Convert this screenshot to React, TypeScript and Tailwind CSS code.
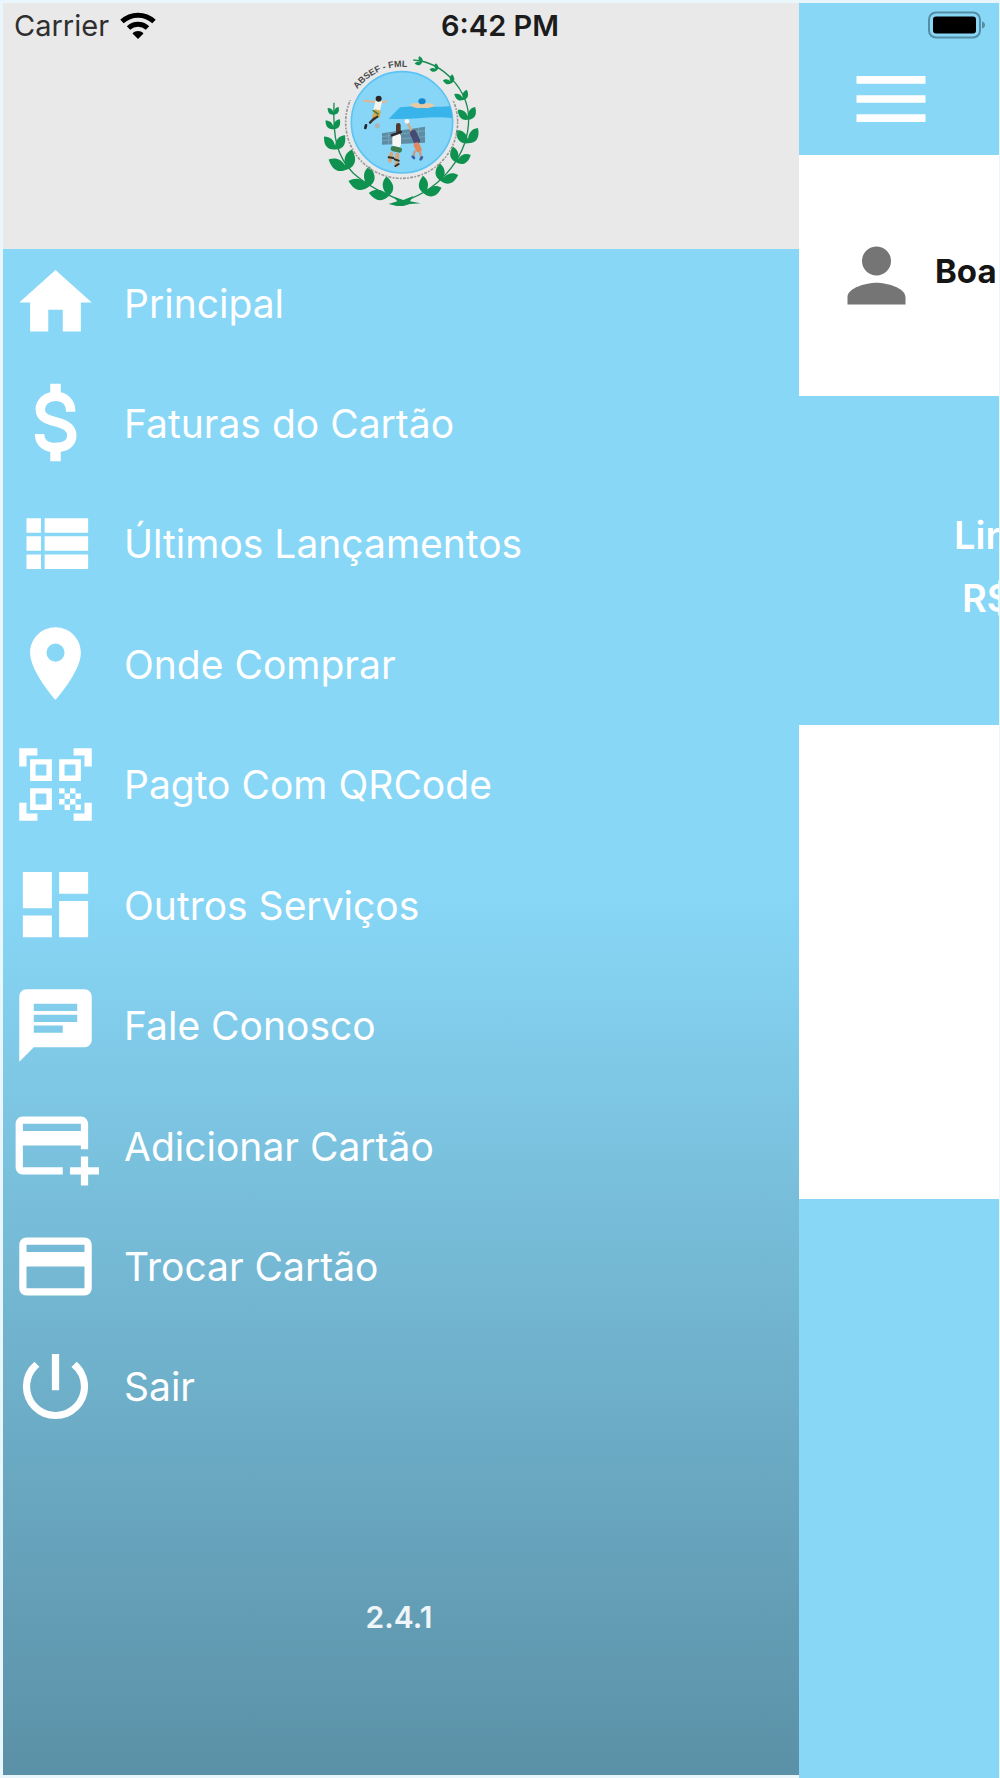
import type { ReactNode } from 'react';
import {
  MdChat,
  MdCreditCard,
  MdDashboard,
  MdHome,
  MdLocationOn,
  MdMenu,
  MdPerson,
  MdPowerSettingsNew,
  MdQrCodeScanner,
} from 'react-icons/md';

interface MenuItem { label: string; icon: ReactNode; }

const iconClass = 'size-[87px] shrink-0';

function DollarIcon() {
  return (
    <svg viewBox="0 0 24 24" className={iconClass} fill="none" stroke="currentColor" strokeWidth="2.6" aria-hidden="true">
      <path d="M16.2 9C16.2 6.4 14.6 4.8 12 4.8C9.4 4.8 7.8 6.4 7.8 8.4C7.8 10.5 9.6 11.2 12 11.8C14.6 12.5 16.5 13.3 16.5 15.6C16.5 17.8 14.6 18.9 12 18.9C9.3 18.9 7.6 17.6 7.6 15.2" />
      <path d="M12 1.3V5M12 18.6V22.7" strokeWidth="2.9" />
    </svg>
  );
}

function ViewListIcon() {
  return (
    <svg viewBox="0 0 24 24" className={iconClass} fill="currentColor" aria-hidden="true">
      <path d="M4 14h4v-4H4v4zm0 5h4v-4H4v4zM4 9h4V5H4v4zm5 5h12v-4H9v4zm0 5h12v-4H9v4zM9 5v4h12V5H9z" />
    </svg>
  );
}

function AddCardIcon() {
  return (
    <svg viewBox="0 0 24 24" className={iconClass} fill="currentColor" aria-hidden="true">
      <path d="M3 4h16c1.11 0 2 .89 2 2v7h-2v-1H3v6h11v2H3c-1.11 0-2-.89-2-2V6c0-1.11.89-2 2-2zm0 2v2h16V6H3z" fillRule="evenodd" />
      <path d="M19 15h2v3h3v2h-3v3h-2v-3h-3v-2h3z" />
    </svg>
  );
}

const menuItems: MenuItem[] = [
  { label: 'Principal', icon: <MdHome className={iconClass} /> },
  { label: 'Faturas do Cartão', icon: <DollarIcon /> },
  { label: 'Últimos Lançamentos', icon: <ViewListIcon /> },
  { label: 'Onde Comprar', icon: <MdLocationOn className={iconClass} /> },
  { label: 'Pagto Com QRCode', icon: <MdQrCodeScanner className={iconClass} /> },
  { label: 'Outros Serviços', icon: <MdDashboard className={iconClass} /> },
  { label: 'Fale Conosco', icon: <MdChat className={iconClass} /> },
  { label: 'Adicionar Cartão', icon: <AddCardIcon /> },
  { label: 'Trocar Cartão', icon: <MdCreditCard className={iconClass} /> },
  { label: 'Sair', icon: <MdPowerSettingsNew className={iconClass} /> },
];

// x, y, rotation and scale of each pair of leaves on the wreath
const leaves = [
  [71, 222, 0, 0.5], [70, 265, 0, 0.65], [75, 325, 2, 0.95], [108, 385, -18, 1.15], [172, 438, -30, 1.15], [232, 466, -38, 1.1],
  [345, 458, 38, 1], [395, 420, 38, 1], [440, 364, 30, 0.9], [474, 306, 0, 1], [474, 236, -4, 0.8], [459, 178, -14, 0.6],
  [423, 128, -28, 0.5], [379, 90, -40, 0.4], [334, 68, -55, 0.4],
];

function Crest() {
  return (
    <svg viewBox="33 30 480 480" className="size-[160px]" role="img" aria-label="ABSEF - FML">
      <g fill="none" stroke="#1c8a52" strokeWidth="4">
        <path d="M72 188C68 300 82 350 130 400C175 440 225 462 280 484" />
        <path d="M310 60C400 66 475 150 476 236C476 340 400 445 280 484" />
      </g>
      <g fill="#0f9150">
        {leaves.map(([x, y, r, s]) => (
          <path key={`${x}-${y}`} d="M0 4C-26 6-36-10-36-36C-16-36-4-26 0-8C2-28 12-40 30-42C36-14 26 4 0 4Z" transform={`translate(${x} ${y}) rotate(${r}) scale(${s})`} />
        ))}
        <path d="M236 492L262 484L250 470L280 480L310 468L300 484L332 490L300 492L280 498L260 498Z" />
      </g>
      <circle cx="275" cy="247" r="168" fill="none" stroke="#9a9a9a" strokeWidth="5" strokeDasharray="5 4 9 4" pathLength="1056" clipPath="url(#crest-ring)" />
      <clipPath id="crest-ring">
        <path d="M90 180H460V430H90Z" />
      </clipPath>
      <circle cx="276" cy="247" r="152" fill="#87d6f7" stroke="#5cc4f4" strokeWidth="5" />
      <path id="crest-arc" d="M142 148A166 166 0 0 1 310 84" fill="none" />
      <text fontSize="27" fontWeight="600" fill="#4a4a4a" fontFamily="Liberation Sans, sans-serif">
        <textPath href="#crest-arc">ABSEF - FML</textPath>
      </text>
      <path d="M236 236L270 202C310 196 370 204 419 198Q428 215 426 234C370 226 300 240 236 236Z" fill="#38b4ea" />
      <path d="M300 194C315 186 325 190 337 190C350 190 360 188 375 196C362 206 350 204 337 204C322 204 312 206 300 194Z" fill="#e9c9a2" />
      <ellipse cx="336" cy="184" rx="11" ry="9" fill="#1688cf" />
      <g strokeLinecap="round" fill="none">
        <path d="M162 182L196 186M212 188L230 184" stroke="#dfb792" strokeWidth="6" />
        <path d="M206 186L200 210" stroke="#f3f3ee" strokeWidth="20" />
        <path d="M198 214L192 232M206 216L204 228" stroke="#d8a94c" strokeWidth="12" />
        <path d="M190 212L204 222" stroke="#3e7d48" strokeWidth="5" />
        <path d="M192 236L180 248M202 230L188 240" stroke="#3a3230" strokeWidth="7" />
        <path d="M168 256L166 264" stroke="#232327" strokeWidth="8" />
      </g>
      <circle cx="206" cy="176" r="9" fill="#2c2626" />
      <circle cx="202" cy="257" r="8" fill="#aab6bd" />
      <path d="M216 280L345 260V308L216 314Z" fill="#5d8ca3" />
      <path d="M216 290L345 272M216 302L345 290M236 277V313M326 263V309" stroke="#7fb0c6" strokeWidth="2" />
      <g strokeLinecap="round" fill="none">
        <path d="M265 256V282" stroke="#54382c" strokeWidth="14" />
        <path d="M260 290V312" stroke="#f6f6f6" strokeWidth="26" />
        <path d="M246 286L272 276" stroke="#2c2a30" strokeWidth="8" />
        <path d="M250 326L268 330" stroke="#3b7f52" strokeWidth="16" />
        <path d="M244 342L240 362M262 344L260 376" stroke="#dca577" strokeWidth="12" />
        <path d="M236 352L250 354M254 358L266 362M256 378L266 372" stroke="#29302c" strokeWidth="6" />
        <path d="M292 246L306 276" stroke="#d8ab84" strokeWidth="8" />
        <path d="M310 280L320 302" stroke="#474a73" strokeWidth="20" />
        <path d="M320 316L326 328" stroke="#e2895e" strokeWidth="18" />
        <path d="M314 334L310 350M330 336L334 356" stroke="#c79b83" strokeWidth="7" />
        <path d="M308 350L312 354M332 358L336 352" stroke="#3b64a8" strokeWidth="8" />
      </g>
      <circle cx="291" cy="244" r="7" fill="#f8f8f8" />
    </svg>
  );
}

function StatusBar() {
  return (
    <div className="absolute inset-x-0 top-0 grid h-[50px] grid-cols-3 items-center px-[14px] text-[29px] leading-none">
      <div className="flex items-center gap-[11px] text-[#2f2f2f]">
        <span>Carrier</span>
        <svg viewBox="0 0 36 27" className="h-[27px] w-[36px]" fill="none" stroke="#000" strokeWidth="5" aria-hidden="true">
          <path d="M2 9.500C11 1 25 1 34 9.500" />
          <path d="M8.500 16C14 11 22 11 27.500 16" />
          <path d="M18 27L12.500 21.500C15.500 18.300 20.500 18.300 23.500 21.500Z" fill="#000" stroke="none" />
        </svg>
      </div>
      <span className="text-center font-semibold text-[#1c1c1c]">6:42 PM</span>
      <svg viewBox="0 0 58 28" className="h-[28px] w-[58px] justify-self-end" aria-hidden="true">
        <rect x="1" y="1.500" width="51" height="25" rx="7" fill="none" stroke="#548ea5" strokeWidth="2" />
        <rect x="5" y="5.500" width="43" height="17" rx="3" />
        <path d="M54 10.500C58 11 58 17 54 17.500Z" fill="#548ea5" />
      </svg>
    </div>
  );
}

function Drawer() {
  return (
    <aside className="mb-[3px] flex flex-col bg-linear-to-b from-[#88d7f7] from-50% to-[#5b91a7]">
      <header className="flex h-[246px] justify-center bg-[#e9e9e9] pt-[47px]">
        <Crest />
      </header>
      <nav className="flex flex-1 pt-[10px]">
        <ul className="flex flex-1 flex-col justify-between">
          {menuItems.map((item) => (
            <li key={item.label}>
              <a href="#" className="flex items-center gap-[25px] pl-[9px] text-[39px] leading-[48px] text-white">
                {item.icon}
                <span className="pt-[2px]">{item.label}</span>
              </a>
            </li>
          ))}
        </ul>
      </nav>
      <footer className="flex h-[345px] items-center justify-center pt-[30px] pr-[4px] text-[30px] font-semibold text-white/90">
        2.4.1
      </footer>
    </aside>
  );
}

function HomeScreen() {
  return (
    <main className="flex min-w-0 flex-col overflow-hidden bg-[#88d7f7] whitespace-nowrap">
      <header className="flex h-[152px] pt-[50px] pl-[46px]">
        <button type="button" aria-label="Menu" className="size-[92px] text-white">
          <MdMenu className="size-full" />
        </button>
      </header>
      <section className="flex h-[241px] items-center gap-[15px] bg-white pl-[34px] text-[33px] font-bold text-[#151515]">
        <MdPerson className={`${iconClass} text-[#757575]`} />
        <span className="pb-[8px]">Boa</span>
      </section>
      <section className="flex h-[329px] flex-col justify-center pt-[12px] pl-[155px] text-[38px] leading-[63px] font-semibold text-white">
        <span>Lir</span>
        <span className="pl-[8px]">R$</span>
      </section>
      <section className="h-[474px] bg-white" />
    </main>
  );
}

export default function App() {
  return (
    <div className="relative grid min-h-screen grid-cols-[796fr_200fr] bg-[#e9f6fc] pt-[3px] pr-px pl-[3px] font-['Inter',sans-serif]">
      <Drawer />
      <HomeScreen />
      <StatusBar />
    </div>
  );
}
